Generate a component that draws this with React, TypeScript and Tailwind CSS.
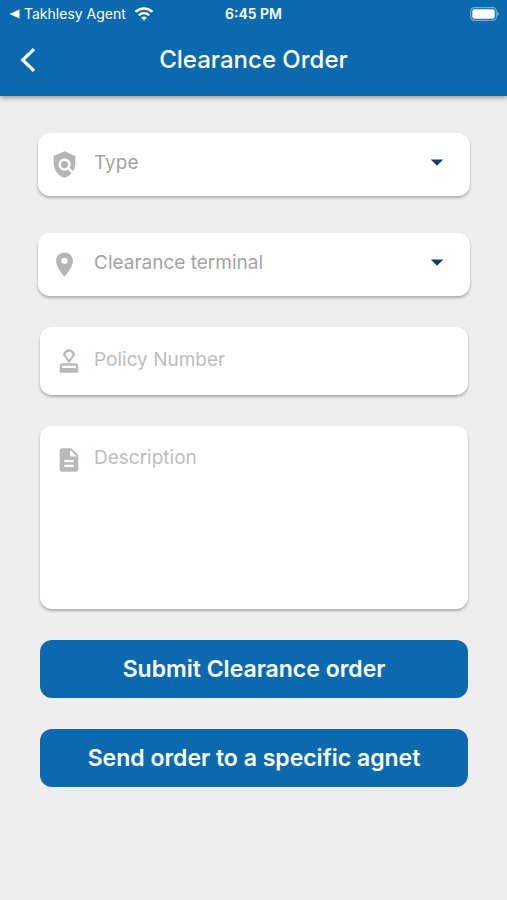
import React, { useState } from "react";
import {
  MdArrowDropDown,
  MdDescription,
  MdLocationOn,
  MdOutlineApproval,
  MdPolicy,
} from "react-icons/md";

const cardShadow = "shadow-[0_2px_3px_rgba(0,0,0,0.28)]";

const StatusBar = () => (
  <div className="grid grid-cols-[1fr_auto_1fr] items-center h-7 px-2 text-white">
    <div className="flex items-center gap-1 text-sm">
      <svg viewBox="0 0 12 10" className="w-3 h-3" fill="currentColor" aria-hidden="true">
        <path d="M11.5.5v9L1.5 5z" />
      </svg>
      <span className="whitespace-nowrap">Takhlesy Agent</span>
      <svg viewBox="0 0 20 15" className="w-5 h-4 ml-1" fill="none" stroke="currentColor" aria-hidden="true">
        <path d="M1.6 5.4a12 12 0 0 1 16.8 0" strokeWidth="2.5" />
        <path d="M4.8 8.7a7.4 7.4 0 0 1 10.4 0" strokeWidth="2.3" />
        <path d="M10 14.2 7.2 11.3a4 4 0 0 1 5.6 0z" fill="currentColor" stroke="none" />
      </svg>
    </div>
    <span className="text-sm font-semibold">6:45 PM</span>
    <svg viewBox="0 0 30 14" className="w-[30px] h-[14px] justify-self-end" aria-hidden="true">
      <rect x="1.7" y="0.7" width="25.6" height="12.6" rx="3.6" fill="none" stroke="#fff" strokeOpacity="0.45" strokeWidth="1.2" />
      <rect x="3.3" y="2.3" width="22.4" height="9.4" rx="2.2" fill="#fff" />
      <path d="M28.3 4.8v4.4c.9-.4 1.5-1.2 1.5-2.2s-.6-1.8-1.5-2.2z" fill="#fff" fillOpacity="0.5" />
    </svg>
  </div>
);

type SelectFieldProps = {
  label: string;
  icon: React.ReactNode;
  options: string[];
};

const SelectField = ({ label, icon, options }: SelectFieldProps) => {
  const [value, setValue] = useState("");

  return (
    <label className={`grid items-center h-[63px] bg-white rounded-xl ${cardShadow}`}>
      <span className="col-start-1 row-start-1 z-10 pl-3 text-[#b5b5b5] pointer-events-none">
        {icon}
      </span>
      <select
        aria-label={label}
        value={value}
        onChange={(e) => setValue(e.target.value)}
        className="col-start-1 row-start-1 w-full h-full pl-14 pr-14 pb-0.5 appearance-none bg-transparent text-[19px] text-[#a3a3a3] rounded-xl outline-none"
      >
        <option value="">{label}</option>
        {options.map((option) => (
          <option key={option}>{option}</option>
        ))}
      </select>
      <span className="col-start-1 row-start-1 justify-self-end pr-[18px] pb-1.5 text-[#083d68] pointer-events-none">
        <MdArrowDropDown size={30} />
      </span>
    </label>
  );
};

export default function App() {
  return (
    <div className="min-h-screen bg-[#eeeeee] font-['Inter',sans-serif]">
      <header className="bg-[#0a6aad] h-24 shadow-[0_2px_5px_rgba(0,0,0,0.35)]">
        <StatusBar />
        <div className="grid grid-cols-[1fr_auto_1fr] items-center h-16 px-5 text-white">
          <button aria-label="Back" className="w-4 h-6">
            <svg viewBox="0 0 16 24" fill="none" stroke="currentColor" strokeWidth="3.2" aria-hidden="true">
              <path d="M14 1.2 2.7 12 14 22.8" />
            </svg>
          </button>
          <h1 className="text-2xl font-medium">Clearance Order</h1>
        </div>
      </header>

      <form className="pt-[37px] pb-10" onSubmit={(e) => e.preventDefault()}>
        <div className="flex flex-col gap-[37px] pl-[38px] pr-[37px]">
          <SelectField
            label="Type"
            icon={<MdPolicy size={29} />}
            options={["Import", "Export"]}
          />
          <SelectField
            label="Clearance terminal"
            icon={<MdLocationOn size={29} />}
            options={["Airport", "Seaport", "Land port"]}
          />
        </div>

        <div className="flex flex-col gap-[31px] pl-10 pr-[39px] pt-[31px]">
          <label className={`flex items-center h-[68px] pl-[15px] bg-white rounded-xl ${cardShadow}`}>
            <MdOutlineApproval size={28} className="text-[#b9b9b9] shrink-0" />
            <input
              type="text"
              aria-label="Policy Number"
              placeholder="Policy Number"
              className="flex-1 min-w-0 h-full pl-[11px] pr-4 pb-1 text-[19px] text-gray-700 placeholder:text-[#bdbdbd] outline-none bg-transparent"
            />
          </label>

          <label className={`flex items-start h-[183px] pl-[15px] pt-5 bg-white rounded-xl ${cardShadow}`}>
            <MdDescription size={28} className="text-[#b9b9b9] shrink-0" />
            <textarea
              aria-label="Description"
              placeholder="Description"
              className="flex-1 min-w-0 h-full pl-[11px] pr-4 text-[19px] leading-6 text-gray-700 placeholder:text-[#bdbdbd] outline-none resize-none bg-transparent"
            />
          </label>

          <button type="submit" className="h-[58px] rounded-xl bg-[#0a6aad] text-white text-[23px] font-semibold">
            Submit Clearance order
          </button>
          <button type="button" className="h-[58px] rounded-xl bg-[#0a6aad] text-white text-[23px] font-semibold">
            Send order to a specific agnet
          </button>
        </div>
      </form>
    </div>
  );
}
